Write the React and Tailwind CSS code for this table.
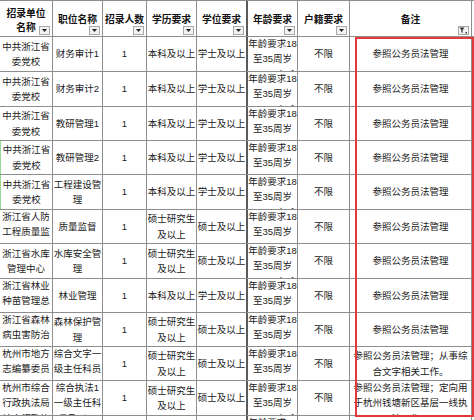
import React from "react";

const W = ["w-[53px]", "w-[50px]", "w-[44px]", "w-[50px]", "w-[51px]", "w-[50px]", "w-[52px]", "w-[122px]"];
const BR = [
  "border-r border-r-[#8e8e8e]",
  "border-r border-r-[#8e8e8e]",
  "border-r border-r-[#8e8e8e]",
  "border-r border-r-[#8e8e8e]",
  "border-r-2 border-r-[#5a5a5a]",
  "border-r border-r-[#8e8e8e]",
  "border-r border-r-[#8e8e8e]",
  "border-r border-r-[#8e8e8e]",
];

const AGE = ["年龄要求18", "至35周岁", "，2022年全"];
const DJ = ["中共浙江省", "委党校"];
const REF = ["参照公务员法管理"];
const BK = ["本科及以上"];
const XS = ["学士及以上"];
const SS = ["硕士研究生", "及以上"];
const SX = ["硕士及以上"];

const rows = [
  { h: "h-[35px]", c: [DJ, ["财务审计1"], ["1"], BK, XS, AGE, ["不限"], REF] },
  { h: "h-[35px]", c: [DJ, ["财务审计2"], ["1"], BK, XS, AGE, ["不限"], REF] },
  { h: "h-[34px]", c: [DJ, ["教研管理1"], ["1"], BK, XS, AGE, ["不限"], REF] },
  { h: "h-[34px]", c: [DJ, ["教研管理2"], ["1"], BK, XS, AGE, ["不限"], REF], g: true },
  { h: "h-[35px]", c: [DJ, ["工程建设管", "理"], ["1"], BK, XS, AGE, ["不限"], REF], g: true },
  { h: "h-[34px]", c: [["浙江省人防", "工程质量监", "督站"], ["质量监督"], ["1"], SS, SX, AGE, ["不限"], REF] },
  { h: "h-[35px]", c: [["浙江省水库", "管理中心"], ["水库安全管", "理"], ["1"], SS, SX, AGE, ["不限"], REF] },
  { h: "h-[34px]", c: [["浙江省林业", "种苗管理总", "站"], ["林业管理"], ["1"], BK, XS, AGE, ["不限"], REF] },
  { h: "h-[34px]", c: [["浙江省森林", "病虫害防治", "总站"], ["森林保护管", "理"], ["1"], SS, SX, AGE, ["不限"], REF] },
  {
    h: "h-[34px]",
    c: [
      ["杭州市地方", "志编纂委员", "会办公室"],
      ["综合文字一", "级主任科员", "及以下"],
      ["1"],
      SS,
      SX,
      AGE,
      ["不限"],
      ["参照公务员法管理；从事综", "合文字相关工作。"],
    ],
  },
  {
    h: "h-[35px]",
    c: [
      ["杭州市综合", "行政执法局", "综合行政执"],
      ["综合执法1", "一级主任科", "员及以下"],
      ["1"],
      SS,
      SX,
      AGE,
      ["不限"],
      ["参照公务员法管理；定向用", "于杭州钱塘新区基层一线执", "法工作。"],
    ],
  },
  {
    h: "h-[35px]",
    c: [
      ["杭州市民政", "局"],
      ["综合执法2", "一级主任科"],
      ["1"],
      SS,
      SX,
      AGE,
      ["不限"],
      REF,
    ],
  },
];

const HEAD = [["招录单位", "名称"], ["职位名称"], ["招录人数"], ["学历要求"], ["学位要求"], ["年龄要求"], ["户籍要求"], ["备注"]];

function FilterBtn({ active }) {
  return (
    <div className="absolute right-[2px] bottom-[1px] w-[11px] h-[9px] border border-[#a8a8a8] bg-[#f2f2f2] flex items-center justify-center">
      {active ? (
        <svg width="9" height="7" viewBox="0 0 9 7">
          <path d="M0.5 0.5 H5.5 L3.6 3 V6 L2.4 5.2 V3 Z" fill="#333" />
          <rect x="6.5" y="5" width="1.5" height="1.5" fill="#333" />
        </svg>
      ) : (
        <svg width="5" height="3" viewBox="0 0 5 3">
          <path d="M0 0 H5 L2.5 3 Z" fill="#222" />
        </svg>
      )}
    </div>
  );
}

function Cell({ i, lines, green }) {
  const top = lines.length >= 3;
  return (
    <div
      className={`${W[i]} ${BR[i]} ${green && i === 0 ? "border-l border-l-[#9ad79a]" : ""} shrink-0 h-full overflow-hidden flex flex-col items-center ${
        top ? "justify-start" : "justify-center"
      } text-center`}
    >
      <div className={top ? "-mt-[1.5px]" : ""}>
        {lines.map((l, k) => (
          <div key={k} className="whitespace-nowrap leading-[15.5px]">
            {l}
          </div>
        ))}
      </div>
    </div>
  );
}

export default function App() {
  return (
    <div
      className="relative w-[474px] h-[420px] overflow-hidden bg-white text-[#1a1a1a] text-[9.5px]"
      style={{ fontFamily: '"Liberation Sans", "Noto Sans CJK SC", sans-serif' }}
    >
      <div className="flex h-[37px] border-t border-b border-[#8e8e8e] font-bold text-[9.8px] text-[#111]">
        {HEAD.map((lines, i) => (
          <div
            key={i}
            className={`${W[i]} ${BR[i]} relative shrink-0 h-full flex flex-col items-center justify-center text-center ${
              i === 0 ? "pt-[4px]" : "pt-[2px]"
            }`}
          >
            {lines.map((l, k) => (
              <div key={k} className="whitespace-nowrap leading-[14px]">
                {l}
              </div>
            ))}
            <FilterBtn active={i === 7} />
          </div>
        ))}
      </div>
      {rows.map((r, ri) => (
        <div key={ri} className={`flex ${r.h} border-b border-[#8e8e8e]`}>
          {r.c.map((lines, i) => (
            <Cell key={i} i={i} lines={lines} green={r.g} />
          ))}
        </div>
      ))}
      <div className="absolute left-[355px] top-[37px] w-[119px] h-[380px] border-[2px] border-[#e2383e] pointer-events-none" />
    </div>
  );
}
